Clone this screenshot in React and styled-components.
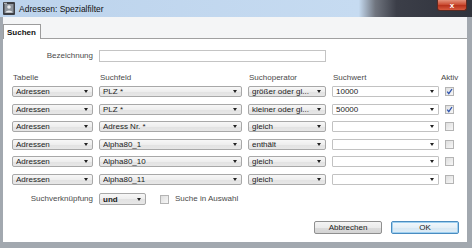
import React from "react";
import styled, { createGlobalStyle } from "styled-components";

const GlobalStyle = createGlobalStyle`
  html, body {
    margin: 0;
    padding: 0;
  }
  body {
    font-family: "Liberation Sans", Arial, sans-serif;
    font-size: 8px;
    color: #1e1e1e;
  }
`;

const Window = styled.div`
  width: 472px;
  height: 248px;
  display: flex;
  flex-direction: column;
  background: #a2a8af;
  overflow: hidden;
`;

const TitleBar = styled.div`
  height: 17px;
  flex-shrink: 0;
  display: flex;
  align-items: center;
  padding-left: 3px;
  background: linear-gradient(
    90deg,
    #bcd3ec 0%,
    #c6dbf1 76%,
    #70757f 79.5%,
    #3b3e48 84%,
    #30333c 100%
  );
`;

const Title = styled.span`
  margin-left: 4px;
  font-size: 8.5px;
  color: #111;
`;

const CloseButton = styled.div`
  align-self: flex-start;
  margin-left: auto;
  margin-right: 5px;
  width: 30px;
  height: 11px;
  box-sizing: border-box;
  border: 1px solid #5b2a22;
  border-top: none;
  border-radius: 0 0 3px 3px;
  background: linear-gradient(#e3917b, #c9462c 50%, #b5301a 51%, #d85a3f);
  display: flex;
  align-items: center;
  justify-content: center;
  color: #fff;
  font-weight: bold;
  font-size: 8px;
`;

const Client = styled.div`
  flex: 1;
  min-height: 0;
  margin: 0 5px 6px 3px;
  display: flex;
  flex-direction: column;
  background: #f4f5f6;
`;

const TabStrip = styled.div`
  height: 21px;
  flex-shrink: 0;
  display: flex;
  align-items: flex-end;
`;

const Tab = styled.div`
  position: relative;
  z-index: 1;
  height: 15px;
  box-sizing: border-box;
  margin-bottom: -1px;
  padding: 0 4px 0 3px;
  display: flex;
  align-items: center;
  background: #fff;
  border: 1px solid #9c9c9c;
  border-bottom: none;
  font-weight: bold;
  color: #111;
`;

const Panel = styled.div`
  flex: 1;
  display: flex;
  flex-direction: column;
  background: #fff;
  border-top: 1px solid #a0a0a0;
  padding: 11px 8px 8px 9px;
`;

const Row = styled.div`
  display: grid;
  grid-template-columns: 81px 143px 78px 107px 20px;
  column-gap: 6px;
  align-items: ${(p) => p.$align || "center"};
  height: ${(p) => p.$h}px;
  margin-top: ${(p) => p.$mt || 0}px;
`;

const Table = styled.div`
  display: flex;
  flex-direction: column;
  gap: 6.5px;
  margin-top: 3px;
`;

const Label = styled.span`
  color: #4a4a4a;
  white-space: nowrap;
  text-align: ${(p) => (p.$right ? "right" : "left")};
  line-height: 10px;
  padding-left: ${(p) => (p.$right ? 0 : 1)}px;
  margin-left: ${(p) => p.$shift || 0}px;
`;

const TextInput = styled.div`
  grid-column: 2 / 4;
  height: 12px;
  box-sizing: border-box;
  border: 1px solid #c4c4c4;
  background: #fff;
`;

const Combo = styled.div`
  height: ${(p) => p.$h || 11}px;
  width: ${(p) => (p.$w ? `${p.$w}px` : "auto")};
  box-sizing: border-box;
  display: flex;
  align-items: center;
  gap: 2px;
  padding: 0 4px 0 3px;
  border: 1px solid ${(p) => (p.$edit ? "#c2c2c2" : "#a8a8a8")};
  border-radius: ${(p) => (p.$edit ? 1 : 2)}px;
  background: ${(p) =>
    p.$edit
      ? "#fff"
      : "linear-gradient(#f7f7f7, #eeeeee 50%, #e2e2e2 51%, #e7e7e7)"};
  color: #1b1b1b;
  font-weight: ${(p) => (p.$bold ? "bold" : "normal")};
`;

const ComboText = styled.span`
  flex: 1;
  min-width: 0;
  white-space: nowrap;
  overflow: hidden;
`;

const Arrow = styled.span`
  flex-shrink: 0;
  width: 0;
  height: 0;
  border-left: 2.5px solid transparent;
  border-right: 2.5px solid transparent;
  border-top: 3px solid #222;
`;

const Check = styled.span`
  width: 9px;
  height: 9px;
  box-sizing: border-box;
  display: block;
  justify-self: start;
  flex-shrink: 0;
  border: 1px solid #b4b4b4;
  background: linear-gradient(135deg, #dedede, #f7f7f7);
`;

const Bottom = styled.div`
  grid-column: 2 / 5;
  display: flex;
  align-items: center;
  gap: 5px;
`;

const Spacer = styled.span`
  width: 4px;
`;

const Footer = styled.div`
  margin-top: auto;
  display: flex;
  justify-content: flex-end;
  gap: 9px;
`;

const Button = styled.div`
  width: 68px;
  height: 13px;
  box-sizing: border-box;
  display: flex;
  align-items: center;
  justify-content: center;
  border-radius: 2px;
  border: 1px solid ${(p) => (p.$primary ? "#4a8cc0" : "#8f8f8f")};
  background: ${(p) =>
    p.$primary
      ? "linear-gradient(#f2f8fc, #e4eff7 50%, #d6e7f3 51%, #dfedf7)"
      : "linear-gradient(#f4f4f4, #ebebeb 50%, #dcdcdc 51%, #d4d4d4)"};
  box-shadow: ${(p) => (p.$primary ? "0 0 0 1px #9fd0f0 inset" : "none")};
  color: #1b1b1b;
`;

const rows = [
  { feld: "PLZ *", op: "größer oder gl...", wert: "10000", aktiv: true },
  { feld: "PLZ *", op: "kleiner oder gl...", wert: "50000", aktiv: true },
  { feld: "Adress Nr. *", op: "gleich", wert: "", aktiv: false },
  { feld: "Alpha80_1", op: "enthält", wert: "", aktiv: false },
  { feld: "Alpha80_10", op: "gleich", wert: "", aktiv: false },
  { feld: "Alpha80_11", op: "gleich", wert: "", aktiv: false },
];

function AppIcon() {
  return (
    <svg width="12" height="13" viewBox="0 0 12 13">
      <rect x="0" y="0" width="12" height="13" rx="1" fill="#3d3f44" />
      <rect x="1.5" y="2" width="9" height="9" fill="#8d949c" />
      <circle cx="6" cy="5" r="1.8" fill="#e8eaec" />
      <path d="M2.5 10.5 C3 7.8 9 7.8 9.5 10.5 Z" fill="#e8eaec" />
      <rect x="1" y="0.8" width="3" height="1" fill="#c9ccd0" />
    </svg>
  );
}

function Select({ children, ...rest }) {
  return (
    <Combo {...rest}>
      <ComboText>{children}</ComboText>
      <Arrow />
    </Combo>
  );
}

function CheckBox({ checked }) {
  return (
    <Check>
      {checked && (
        <svg width="7" height="7" viewBox="0 0 7 7" style={{ display: "block" }}>
          <polyline
            points="1.2,3.6 2.8,5.6 6,1"
            fill="none"
            stroke="#2e54b0"
            strokeWidth="1.3"
          />
        </svg>
      )}
    </Check>
  );
}

function App() {
  return (
    <Window>
      <GlobalStyle />
      <TitleBar>
        <AppIcon />
        <Title>Adressen: Spezialfilter</Title>
        <CloseButton>x</CloseButton>
      </TitleBar>
      <Client>
        <TabStrip>
          <Tab>Suchen</Tab>
        </TabStrip>
        <Panel>
          <Row $h={12}>
            <Label $right>Bezeichnung</Label>
            <TextInput />
          </Row>
          <Row $h={10} $mt={11} $align="end">
            <Label>Tabelle</Label>
            <Label>Suchfeld</Label>
            <Label>Suchoperator</Label>
            <Label>Suchwert</Label>
            <Label $shift={-5}>Aktiv</Label>
          </Row>
          <Table>
            {rows.map((r, i) => (
              <Row key={i} $h={11}>
                <Select>Adressen</Select>
                <Select>{r.feld}</Select>
                <Select>{r.op}</Select>
                <Select $edit>{r.wert}</Select>
                <CheckBox checked={r.aktiv} />
              </Row>
            ))}
          </Table>
          <Row $h={12} $mt={8.5}>
            <Label $right>Suchverknüpfung</Label>
            <Bottom>
              <Select $w={47} $h={12} $bold>
                und
              </Select>
              <Spacer />
              <CheckBox />
              <Label>Suche in Auswahl</Label>
            </Bottom>
          </Row>
          <Footer>
            <Button>Abbrechen</Button>
            <Button $primary>OK</Button>
          </Footer>
        </Panel>
      </Client>
    </Window>
  );
}

export default App;
